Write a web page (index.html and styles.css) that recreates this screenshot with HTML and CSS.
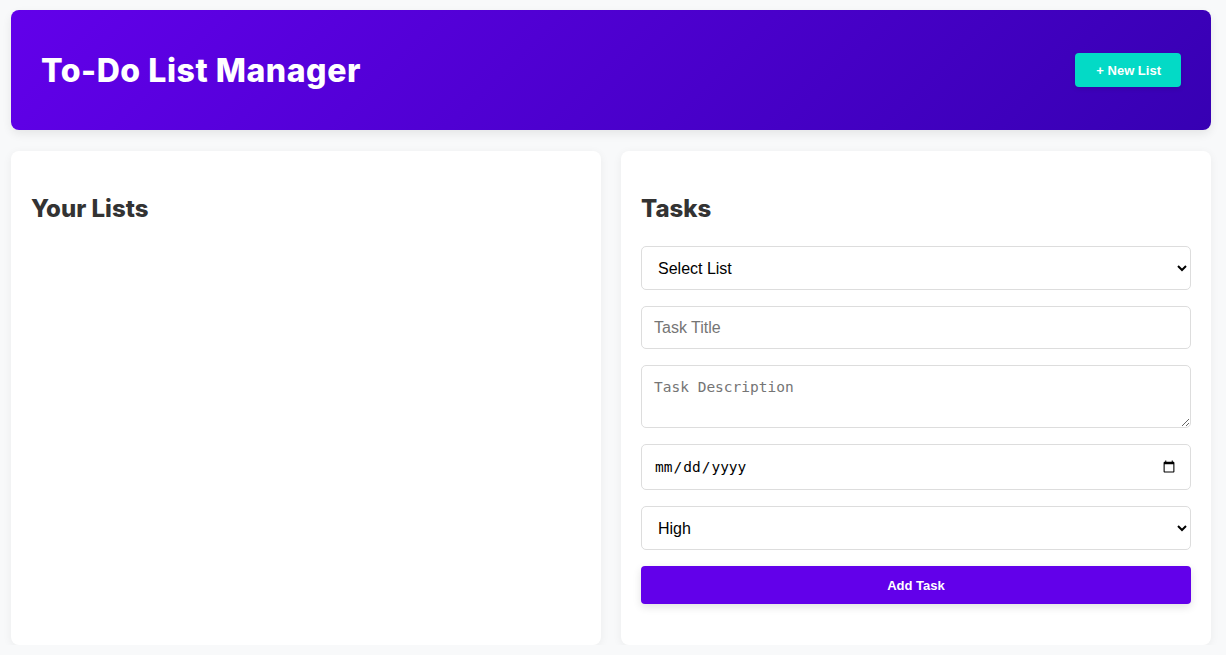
FILE: index.html
```html
<!DOCTYPE html>
<html lang="en">
<head>
<meta charset="utf-8">
<title>To-Do List Manager</title>
<link rel="stylesheet" href="styles.css">
</head>
<body>
<div class="container">
  <header class="app-header">
    <h1 class="title">To-Do List Manager</h1>
    <button class="btn-new">+ New List</button>
  </header>
  <main class="columns">
    <section class="card">
      <h2 class="card-title">Your Lists</h2>
    </section>
    <section class="card">
      <h2 class="card-title">Tasks</h2>
      <form class="task-form">
        <select class="field field-select">
          <option>Select List</option>
        </select>
        <input class="field field-text" type="text" placeholder="Task Title">
        <textarea class="field field-area" placeholder="Task Description"></textarea>
        <input class="field field-date" type="date">
        <select class="field field-select">
          <option>High</option>
          <option>Medium</option>
          <option>Low</option>
        </select>
        <button type="button" class="btn-add">Add Task</button>
      </form>
    </section>
  </main>
</div>
</body>
</html>
```
FILE: styles.css
```css
* { box-sizing: border-box; }
html, body { margin: 0; padding: 0; }
body {
  background: #f8f9fa;
  font-family: "Liberation Sans", Arial, sans-serif;
  color: #333;
}
.container {
  width: 1200px;
  margin: 10px 0 0 11px;
}
.app-header {
  height: 120px;
  padding: 0 30px;
  display: flex;
  align-items: center;
  justify-content: space-between;
  background: linear-gradient(135deg, #6200ea, #3700b3);
  border-radius: 8px;
  box-shadow: 0 4px 10px rgba(0, 0, 0, 0.08);
}
.title {
  margin: 0;
  font-family: Inter, "Noto Sans", sans-serif;
  font-weight: 800;
  font-size: 32px;
  letter-spacing: 0.55px;
  color: #fff;
}
.btn-new {
  height: 34px;
  padding: 0 20px 0 21px;
  border: none;
  border-radius: 4px;
  background: #03dac6;
  color: #fff;
  font-family: "Liberation Sans", Arial, sans-serif;
  font-weight: 700;
  font-size: 13px;
  box-shadow: 0 2px 5px rgba(0, 0, 0, 0.1);
}
.columns {
  margin-top: 21px;
  display: grid;
  grid-template-columns: 1fr 1fr;
  gap: 20px;
}
.card {
  background: #fff;
  border-radius: 8px;
  padding: 20px 20px 41px;
  box-shadow: 0 2px 10px rgba(0, 0, 0, 0.06);
}
.card-title {
  margin: 20px 0 19px;
  line-height: 36px;
  font-family: Inter, "Noto Sans", sans-serif;
  font-weight: 800;
  font-size: 24px;
  color: #333;
}
.task-form {
  display: flex;
  flex-direction: column;
  gap: 16px;
}
.field {
  width: 100%;
  border: 1px solid #ddd;
  border-radius: 5px;
  background: #fff;
  padding: 12px;
  margin: 0;
}
.field-select {
  height: 44px;
  font-family: "Liberation Sans", Arial, sans-serif;
  font-size: 16px;
  color: #000;
}
.field-text {
  height: 43px;
  font-family: "Liberation Sans", Arial, sans-serif;
  font-size: 16px;
  color: #000;
}
.field-text::placeholder { color: #757575; }
.field-area {
  height: 63px;
  padding-top: 13px;
  font-family: "DejaVu Sans Mono", monospace;
  font-size: 14.5px;
  resize: vertical;
}
.field-area::placeholder { color: #757575; }
.field-date {
  height: 46px;
  font-family: "DejaVu Sans Mono", monospace;
  font-size: 14.5px;
  color: #000;
}
.btn-add {
  height: 38px;
  border: none;
  border-radius: 4px;
  background: #6200ea;
  color: #fff;
  font-family: "Liberation Sans", Arial, sans-serif;
  font-weight: 700;
  font-size: 13px;
  box-shadow: 0 3px 8px rgba(0, 0, 0, 0.12);
}
```
